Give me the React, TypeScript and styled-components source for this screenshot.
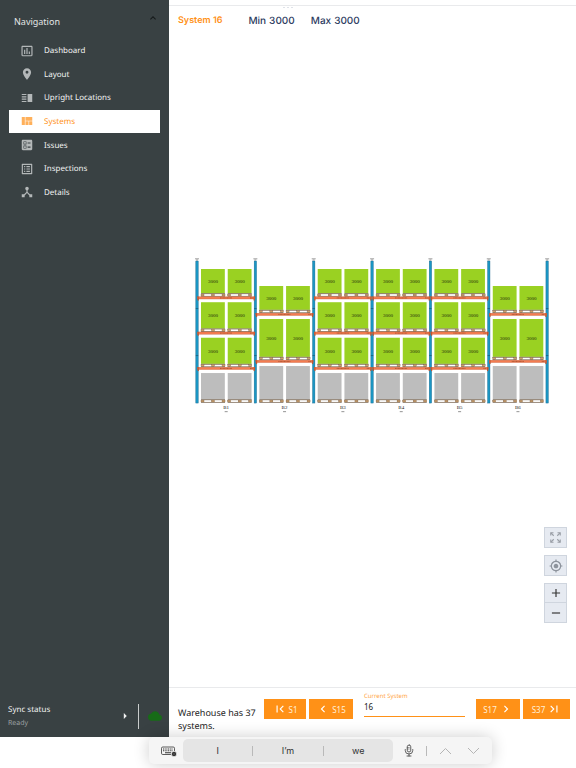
import React, { useState } from "react";
import styled, { createGlobalStyle, css } from "styled-components";
import {
  MdAdd,
  MdArrowRight,
  MdBallot,
  MdChevronLeft,
  MdChevronRight,
  MdCloud,
  MdDeviceHub,
  MdExpandLess,
  MdFirstPage,
  MdInsertChartOutlined,
  MdLastPage,
  MdListAlt,
  MdLocationOn,
  MdMyLocation,
  MdRemove,
  MdVerticalSplit,
  MdViewQuilt,
} from "react-icons/md";

const colors = {
  slate: "#394143",
  orange: "#ff9117",
  navy: "#2b3a5e",
  line: "#e9eaec",
};

const GlobalStyle = createGlobalStyle`
  * { box-sizing: border-box; }
  body {
    margin: 0;
    background: #fff;
    font-family: "Noto Sans", "Open Sans", sans-serif;
    font-size: 9px;
    color: #222;
    text-rendering: geometricPrecision;
  }
  button, input { font-family: inherit; }
`;

const Page = styled.div`
  position: relative;
  min-height: 100vh;
  padding-bottom: 31px;
  display: flex;
  overflow: hidden;
`;

const Sidebar = styled.aside`
  flex: 0 0 169px;
  display: flex;
  flex-direction: column;
  background: ${colors.slate};
  color: #f1f2f2;
`;

const NavToggle = styled.button`
  display: flex;
  justify-content: space-between;
  align-items: flex-start;
  margin: 12px 10px 0 14px;
  padding: 0;
  height: 27px;
  border: 0;
  background: none;
  color: #e4e6e6;
  font-size: 9px;
  line-height: 20px;
  svg { color: #15191a; }
`;

const NavList = styled.ul`
  list-style: none;
  margin: 0;
  padding: 0 9px;
  display: grid;
  grid-auto-rows: 1fr;
  height: 165px;
`;

const NavLink = styled.a<{ $active?: boolean }>`
  display: flex;
  align-items: center;
  gap: 10px;
  height: 100%;
  padding-left: 11px;
  color: #f1f2f2;
  font-size: 8px;
  text-decoration: none;
  svg { color: #b4b8b9; flex: none; }
  ${(p) =>
    p.$active &&
    css`
      background: #fff;
      color: ${colors.orange};
      svg { color: #ffb05a; }
    `}
`;

const SyncPanel = styled.div`
  margin-top: auto;
  display: flex;
  align-items: center;
  height: 42px;
  padding: 0 7px 0 8px;
`;

const SyncText = styled.div`
  flex: 1;
  padding-top: 2px;
  font-size: 8px;
  line-height: 14px;
  small {
    display: block;
    font-size: 7px;
    color: #9ba0a1;
  }
`;

const SyncDivider = styled.span`
  width: 1px;
  height: 25px;
  margin: 0 9px 0 6px;
  background: #c9cccc;
`;

const Main = styled.main`
  flex: 1;
  min-width: 0;
  display: flex;
  flex-direction: column;
`;

const DragHandle = styled.div`
  height: 10px;
  margin-top: 5px;
  border-top: 1px solid ${colors.line};
  display: flex;
  justify-content: center;
  gap: 2px;
  padding: 1px 170px 0 0;
  span {
    width: 2px;
    height: 1px;
    background: #dfe2e8;
  }
`;

const Summary = styled.header`
  display: flex;
  align-items: center;
  gap: 16px;
  height: 11px;
  padding-left: 9px;
  font-family: Inter, sans-serif;
  font-size: 10px;
  font-weight: 500;
  color: ${colors.navy};
`;

const SystemName = styled.h1`
  margin: 0 10px 0 0;
  font-size: 9px;
  font-weight: 600;
  color: ${colors.orange};
`;

const Limit = styled.span`
  display: flex;
  gap: 3px;
`;

const Canvas = styled.section`
  position: relative;
  flex: 1;
  display: flex;
  flex-direction: column;
  align-items: center;
  justify-content: center;
  padding-bottom: 42px;
`;

const RackDrawing = styled.svg`
  width: 88%;
  display: block;
  text-rendering: auto;
`;

const MapTools = styled.div`
  position: absolute;
  right: 9px;
  bottom: 64px;
  display: flex;
  flex-direction: column;
`;

const ToolButton = styled.button<{ $zoom?: boolean }>`
  display: flex;
  align-items: center;
  justify-content: center;
  width: 23px;
  height: ${(p) => (p.$zoom ? 20 : 21)}px;
  padding: 0;
  margin-bottom: ${(p) => (p.$zoom ? 0 : 7)}px;
  border: 1px solid #cfd5de;
  background: #e6eaf1;
  color: #333;
  &:last-child { border-top-width: 0; }
`;

const Footer = styled.footer`
  display: flex;
  align-items: flex-start;
  height: 50px;
  padding: 0 6px 0 9px;
  border-top: 1px solid ${colors.line};
`;

const Count = styled.p`
  width: 82px;
  margin: 18px 4px 0 0;
  font-size: 9px;
  line-height: 13px;
`;

const Group = styled.div`
  display: flex;
  gap: 3px;
  margin-top: 11px;
`;

const PageButton = styled.button<{ $width?: number }>`
  display: flex;
  align-items: center;
  justify-content: center;
  gap: 2px;
  width: ${(p) => p.$width ?? 44}px;
  height: 20px;
  padding: 0;
  border: 0;
  background: ${colors.orange};
  color: #fff0d8;
  font-size: 8px;
  svg { color: #fff; }
`;

const Field = styled.label`
  flex: 1;
  display: block;
  margin: 3px 11px 0 11px;
  color: #ffa544;
  font-size: 6px;
  line-height: 10px;
  input {
    display: block;
    width: 100%;
    height: 16px;
    padding: 0 0 4px;
    border: 0;
    border-bottom: 1px solid ${colors.orange};
    border-radius: 0;
    outline: 0;
    background: none;
    color: #222;
    font-size: 8px;
  }
`;

const KeyboardBar = styled.div`
  position: absolute;
  left: 149px;
  right: 84px;
  bottom: 4px;
  height: 27px;
  display: flex;
  align-items: center;
  padding: 0 12px 0 12px;
  border-radius: 5px;
  background: #f5f5f5;
  box-shadow: 0 0 16px rgba(0, 0, 0, 0.2);
  color: #333;
`;

const Suggestions = styled.div`
  flex: 1;
  display: flex;
  align-items: center;
  height: 23px;
  margin: 0 11px 0 6px;
  border-radius: 5px;
  background: #e5e5e5;
`;

const BarButton = styled.button`
  display: flex;
  align-items: center;
  justify-content: center;
  padding: 0;
  border: 0;
  background: none;
  color: #333;
`;

const Word = styled(BarButton)`
  flex: 1;
  height: 100%;
  font-family: Inter, sans-serif;
  font-size: 9px;
`;

const Separator = styled.span`
  width: 1px;
  height: 10px;
  background: #b9b9b9;
`;

const Arrows = styled.div`
  display: flex;
  gap: 15px;
  margin-left: 12px;
`;

const DictationDivider = styled(Separator)`
  margin-left: 12px;
`;

const navItems = [
  { label: "Dashboard", Icon: MdInsertChartOutlined },
  { label: "Layout", Icon: MdLocationOn },
  { label: "Upright Locations", Icon: MdVerticalSplit },
  { label: "Systems", Icon: MdViewQuilt, active: true },
  { label: "Issues", Icon: MdBallot },
  { label: "Inspections", Icon: MdListAlt },
  { label: "Details", Icon: MdDeviceHub },
];

type Level = { top: number; bottom: number; ground?: boolean };

const fourLevels: Level[] = [
  { top: 13, bottom: 37.3 },
  { top: 46.2, bottom: 72.5 },
  { top: 81.7, bottom: 107.8 },
  { top: 117, bottom: 143.3, ground: true },
];
const threeLevels: Level[] = [
  { top: 30, bottom: 53.8 },
  { top: 63, bottom: 100.8 },
  { top: 110, bottom: 143.3, ground: true },
];
const bays = [fourLevels, threeLevels, fourLevels, fourLevels, fourLevels, threeLevels];
const PITCH = 58.33;
const FIRST = 4;

function Pallet({ x, y }: { x: number; y: number }) {
  return (
    <g>
      <rect x={x} y={y} width="24" height="0.8" fill="#6f5a45" />
      {[0, 10.5, 21].map((dx) => (
        <rect key={dx} x={x + dx} y={y + 0.8} width="3" height="1.8" fill="#cfa169" stroke="#6e5239" strokeWidth="0.3" />
      ))}
      <rect x={x} y={y + 2.6} width="24" height="0.7" fill="#6f5a45" />
    </g>
  );
}

function Bay({ index, levels }: { index: number; levels: Level[] }) {
  const x = FIRST + index * PITCH;
  return (
    <g>
      {levels.map((level) => (
        <g key={level.top}>
          {[x + 4, x + 30.7].map((bx) => (
            <g key={bx}>
              <rect x={bx} y={level.top} width="23.8" height={level.bottom - level.top} fill={level.ground ? "#bdbdbd" : "#9ad122"} />
              {!level.ground && (
                <text x={bx + 12} y={(level.top + level.bottom) / 2 + 1.8} fontSize="5" textAnchor="middle" fill="#24300c">
                  3000
                </text>
              )}
              <Pallet x={bx} y={level.bottom} />
            </g>
          ))}
          {!level.ground && (
            <g>
              <rect x={x + 0.4} y={level.bottom + 3.4} width={PITCH - 0.8} height="2.3" fill="#f47c50" stroke="#b8522c" strokeWidth="0.3" />
              <rect x={x + 0.6} y={level.bottom + 3.4} width="1.2" height="3.8" fill="#c4552f" />
              <rect x={x + PITCH - 1.8} y={level.bottom + 3.4} width="1.2" height="3.8" fill="#c4552f" />
              <path d={`M${x + 23} ${level.bottom + 4.6}h12M${x + 53} ${level.bottom + 4.6}h3`} stroke="#713219" strokeWidth="0.5" strokeDasharray="1 0.4" />
            </g>
          )}
        </g>
      ))}
      <text x={x + PITCH / 2} y="153.2" fontSize="5" textAnchor="middle" fill="#222">
        B{index + 1}
      </text>
      <path d={`M${x + PITCH / 2 - 1.5} 155.6h3`} stroke="#777" strokeWidth="0.8" />
    </g>
  );
}

function Rack() {
  return (
    <RackDrawing viewBox="0 0 358 158" fontFamily='"Liberation Serif", serif' role="img" aria-label="Rack elevation">
      {Array.from({ length: 7 }, (_, i) => {
        const x = FIRST + i * PITCH;
        return (
          <g key={i}>
            <rect x={x - 1.2} y="5" width="2.4" height="142" fill="#1b96c4" stroke="#17668a" strokeWidth="0.4" />
            <path d={`M${x - 2} 2.8h4M${x - 1} 4h2`} stroke="#777" strokeWidth="0.7" />
            <path d={`M${x - 1.2} 52.5h2.4M${x - 1.2} 99.5h2.4`} stroke="#174b63" strokeWidth="0.6" />
          </g>
        );
      })}
      {bays.map((levels, i) => (
        <Bay key={i} index={i} levels={levels} />
      ))}
    </RackDrawing>
  );
}

function FitIcon() {
  return (
    <svg width="13" height="13" viewBox="0 0 26 26" fill="none" stroke="#9a9fa7" strokeWidth="2.2">
      <path d="M9.500 9.500L4 4M16.500 9.500L22 4M9.500 16.500L4 22M16.500 16.500L22 22" />
      <path d="M3.500 9V3.500H9M17 3.500h5.500V9M3.500 17v5.500H9M17 22.500h5.500V17" />
    </svg>
  );
}

function KeyboardIcon() {
  return (
    <svg width="16" height="12" viewBox="0 0 32 24" fill="none" stroke="#333" strokeWidth="1.6">
      <rect x="1" y="4" width="26" height="15" rx="2.5" />
      <path d="M4 8h20M4 11.5h20" strokeDasharray="2 1.4" strokeWidth="2" />
      <path d="M8 15.5h12" strokeWidth="2" />
      <circle cx="26" cy="18" r="5.500" fill="#333" stroke="#f5f5f5" />
      <path d="M23.5 18h5" stroke="#888" strokeWidth="1" />
    </svg>
  );
}

function MicIcon() {
  return (
    <svg width="10" height="13" viewBox="0 0 20 26" fill="none" stroke="#444" strokeWidth="1.7" strokeLinecap="round">
      <rect x="6.5" y="2" width="7" height="14" rx="3.5" />
      <path d="M6.5 7h4M6.5 10h4" strokeWidth="1" />
      <path d="M2.5 11v2a7.500 7 0 0 0 15 0v-2M10 20v4M6 24h8" />
    </svg>
  );
}

function Caret({ down }: { down?: boolean }) {
  return (
    <svg width="13" height="8" viewBox="0 0 13 8" fill="none" stroke="#b5b5b5" strokeWidth="1">
      <path d={down ? "M1 1l5.500 5.500L12 1" : "M1 7l5.500-5.500L12 7"} />
    </svg>
  );
}

export default function App() {
  const [system, setSystem] = useState("16");
  return (
    <>
      <GlobalStyle />
      <Page>
        <Sidebar>
          <NavToggle aria-expanded="true">
            Navigation
            <MdExpandLess size={12} />
          </NavToggle>
          <nav aria-label="Main">
            <NavList>
              {navItems.map(({ label, Icon, active }) => (
                <li key={label}>
                  <NavLink href="#" $active={active} aria-current={active ? "page" : undefined}>
                    <Icon size={14} />
                    {label}
                  </NavLink>
                </li>
              ))}
            </NavList>
          </nav>
          <SyncPanel>
            <SyncText>
              Sync status
              <small>Ready</small>
            </SyncText>
            <MdArrowRight size={14} />
            <SyncDivider />
            <MdCloud size={14} color="#176b17" />
          </SyncPanel>
        </Sidebar>
        <Main>
          <DragHandle>
            <span />
            <span />
            <span />
          </DragHandle>
          <Summary>
            <SystemName>System 16</SystemName>
            <Limit>
              <span>Min</span>
              <span>3000</span>
            </Limit>
            <Limit>
              <span>Max</span>
              <span>3000</span>
            </Limit>
          </Summary>
          <Canvas>
            <Rack />
            <MapTools>
              <ToolButton aria-label="Fit to view">
                <FitIcon />
              </ToolButton>
              <ToolButton aria-label="Center">
                <MdMyLocation size={14} color="#8d939c" />
              </ToolButton>
              <ToolButton $zoom aria-label="Zoom in">
                <MdAdd size={14} />
              </ToolButton>
              <ToolButton $zoom aria-label="Zoom out">
                <MdRemove size={14} />
              </ToolButton>
            </MapTools>
          </Canvas>
          <Footer>
            <Count>Warehouse has 37 systems.</Count>
            <Group>
              <PageButton $width={42}>
                <MdFirstPage size={14} />
                S1
              </PageButton>
              <PageButton>
                <MdChevronLeft size={14} />
                S15
              </PageButton>
            </Group>
            <Field>
              Current System
              <input value={system} onChange={(e) => setSystem(e.target.value)} />
            </Field>
            <Group>
              <PageButton>
                S17
                <MdChevronRight size={14} />
              </PageButton>
              <PageButton $width={47}>
                S37
                <MdLastPage size={14} />
              </PageButton>
            </Group>
          </Footer>
        </Main>
        <KeyboardBar>
          <BarButton aria-label="Keyboard">
            <KeyboardIcon />
          </BarButton>
          <Suggestions>
            <Word>I</Word>
            <Separator />
            <Word>I’m</Word>
            <Separator />
            <Word>we</Word>
          </Suggestions>
          <BarButton aria-label="Dictate">
            <MicIcon />
          </BarButton>
          <DictationDivider />
          <Arrows>
            <BarButton aria-label="Previous">
              <Caret />
            </BarButton>
            <BarButton aria-label="Next">
              <Caret down />
            </BarButton>
          </Arrows>
        </KeyboardBar>
      </Page>
    </>
  );
}
